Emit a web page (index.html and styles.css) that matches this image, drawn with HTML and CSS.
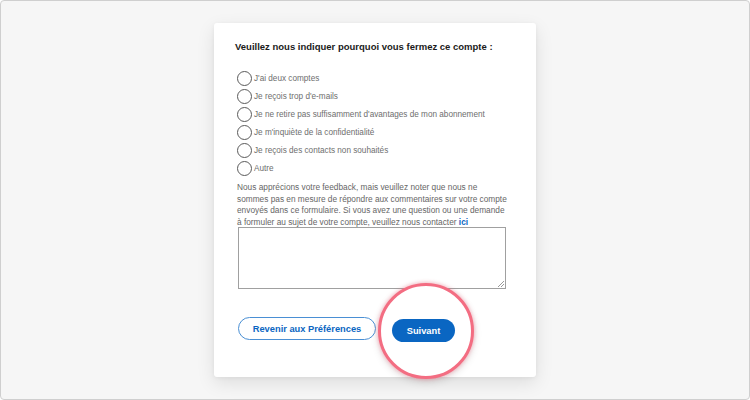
FILE: index.html
```html
<!DOCTYPE html>
<html lang="fr">
<head>
<meta charset="utf-8">
<link rel="stylesheet" href="styles.css">
</head>
<body>
<div class="frame">
  <div class="card">
    <h1 class="title">Veuillez nous indiquer pourquoi vous fermez ce compte :</h1>
    <ul class="options">
      <li class="option"><span class="radio"></span><span class="label">J'ai deux comptes</span></li>
      <li class="option"><span class="radio"></span><span class="label">Je reçois trop d'e-mails</span></li>
      <li class="option"><span class="radio"></span><span class="label">Je ne retire pas suffisamment d'avantages de mon abonnement</span></li>
      <li class="option"><span class="radio"></span><span class="label">Je m'inquiète de la confidentialité</span></li>
      <li class="option"><span class="radio"></span><span class="label">Je reçois des contacts non souhaités</span></li>
      <li class="option"><span class="radio"></span><span class="label">Autre</span></li>
    </ul>
    <p class="note">Nous apprécions votre feedback, mais veuillez noter que nous ne<br>sommes pas en mesure de répondre aux commentaires sur votre compte<br>envoyés dans ce formulaire. Si vous avez une question ou une demande<br>à formuler au sujet de votre compte, veuillez nous contacter <a class="link">ici</a></p>
    <div class="textarea"><span class="grip"></span></div>
    <div class="actions">
      <button class="btn btn-outline">Revenir aux Préférences</button>
      <div class="highlight">
        <button class="btn btn-primary">Suivant</button>
      </div>
    </div>
  </div>
</div>
</body>
</html>
```

FILE: styles.css
```css
* { box-sizing: border-box; }
html, body { margin: 0; padding: 0; }
body {
  width: 750px;
  height: 400px;
  font-family: "Liberation Sans", Arial, sans-serif;
  overflow: hidden;
}
.frame {
  width: 750px;
  height: 400px;
  background: #f6f6f6;
  border: 1px solid #cfcfcf;
  border-radius: 4px;
  padding-top: 22px;
  padding-left: 213px;
}
.card {
  width: 322px;
  height: 354px;
  background: #fff;
  border-radius: 3px;
  box-shadow: 0 6px 18px rgba(0, 0, 0, 0.10), 0 1px 4px rgba(0, 0, 0, 0.05);
  padding: 17px 8px 0 21px;
}
.title {
  margin: 0;
  font-size: 9.5px;
  font-weight: bold;
  color: #1b1b1b;
  line-height: 14px;
  white-space: nowrap;
}
.options {
  list-style: none;
  margin: 15px 0 0 2px;
  padding: 0;
}
.option {
  display: flex;
  align-items: center;
  height: 18px;
}
.radio {
  width: 15px;
  height: 15px;
  border: 1px solid #5a5a5a;
  border-radius: 50%;
  margin-right: 2px;
  flex: none;
}
.label {
  font-size: 8.2px;
  color: #6e6e6e;
  white-space: nowrap;
}
.note {
  margin: 5px 0 0 2px;
  font-size: 8.3px;
  line-height: 11.6px;
  color: #666;
  white-space: nowrap;
}
.link {
  color: #0a66c2;
  font-weight: bold;
}
.textarea {
  position: relative;
  margin: -1px 0 0 3px;
  width: 268px;
  height: 62px;
  border: 1px solid #a0a0a0;
}
.grip {
  position: absolute;
  right: 1px;
  bottom: 1px;
  width: 6px;
  height: 6px;
  background: linear-gradient(135deg, transparent 45%, #999 45%, #999 55%, transparent 55%, transparent 70%, #999 70%, #999 80%, transparent 80%);
}
.actions {
  display: flex;
  align-items: flex-start;
  margin: 28px 0 0 3px;
}
.btn {
  font-family: "Liberation Sans", Arial, sans-serif;
  font-weight: bold;
  font-size: 9.3px;
  border-radius: 12px;
  cursor: pointer;
}
.btn-outline {
  width: 138px;
  height: 23px;
  background: #fff;
  color: #0a66c2;
  border: 1px solid #4a8fd4;
}
.highlight {
  position: relative;
  margin-left: 16px;
  margin-top: 2px;
}
.highlight::before {
  content: "";
  position: absolute;
  left: 50%;
  top: 50%;
  width: 90px;
  height: 90px;
  margin: -48px 0 0 -46px;
  border: 3px solid #f36d82;
  border-radius: 50%;
  background: #fff;
  box-shadow: 0 0 4px rgba(243, 109, 130, 0.6), 0 3px 8px rgba(0, 0, 0, 0.12);
}
.btn-primary {
  position: relative;
  width: 63px;
  height: 23px;
  background: #0a66c2;
  color: #fff;
  border: none;
}
```
